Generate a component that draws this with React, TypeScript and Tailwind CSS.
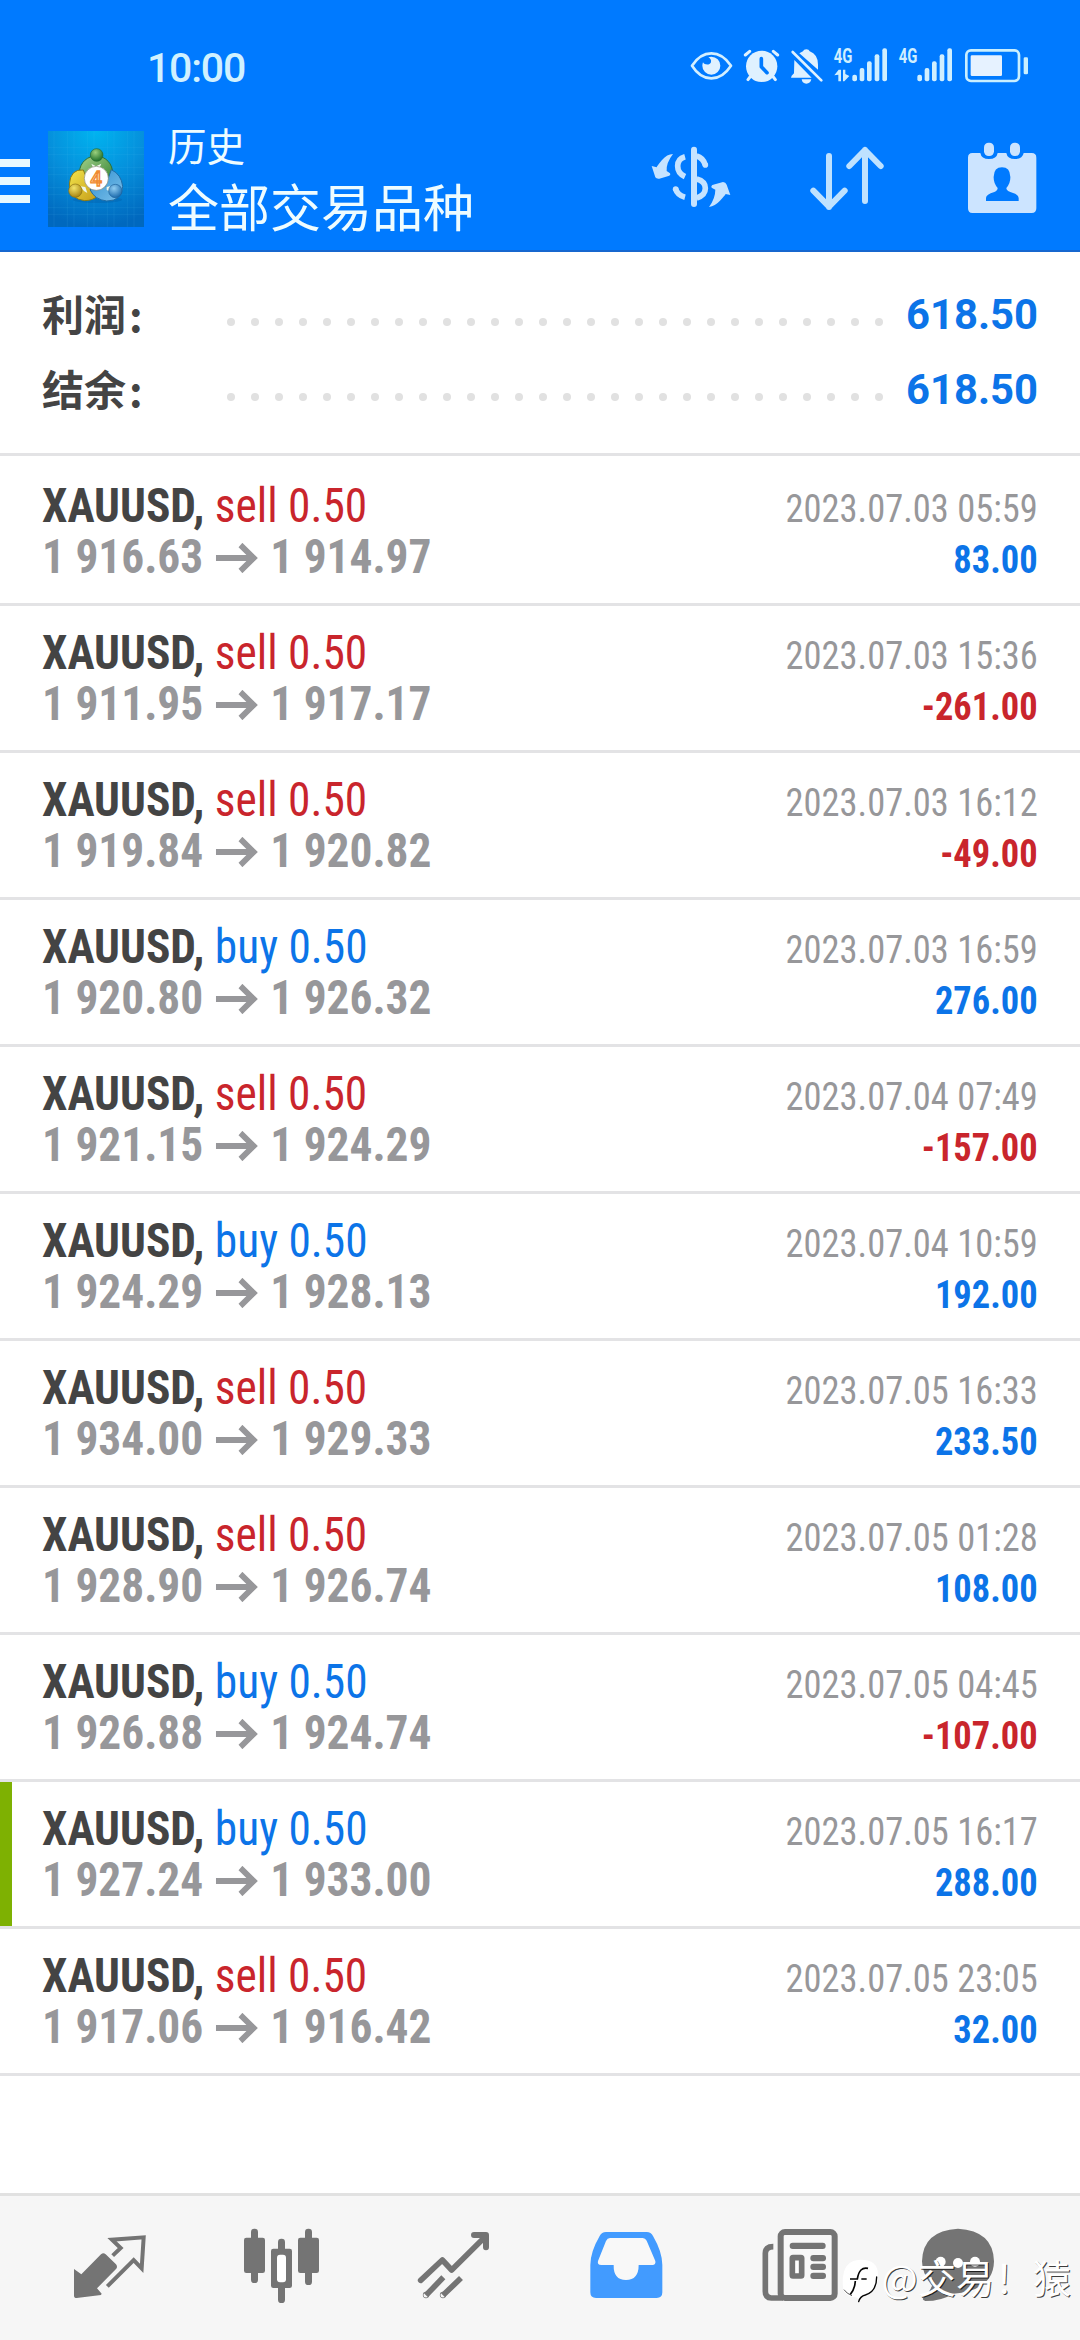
import React from "react";

type Side = "sell" | "buy";

interface Deal {
  side: Side;
  open: string;
  close: string;
  time: string;
  profit: string;
  marked?: boolean;
}

const deals: Deal[] = [
  { side: "sell", open: "1 916.63", close: "1 914.97", time: "2023.07.03 05:59", profit: "83.00" },
  { side: "sell", open: "1 911.95", close: "1 917.17", time: "2023.07.03 15:36", profit: "-261.00" },
  { side: "sell", open: "1 919.84", close: "1 920.82", time: "2023.07.03 16:12", profit: "-49.00" },
  { side: "buy", open: "1 920.80", close: "1 926.32", time: "2023.07.03 16:59", profit: "276.00" },
  { side: "sell", open: "1 921.15", close: "1 924.29", time: "2023.07.04 07:49", profit: "-157.00" },
  { side: "buy", open: "1 924.29", close: "1 928.13", time: "2023.07.04 10:59", profit: "192.00" },
  { side: "sell", open: "1 934.00", close: "1 929.33", time: "2023.07.05 16:33", profit: "233.50" },
  { side: "sell", open: "1 928.90", close: "1 926.74", time: "2023.07.05 01:28", profit: "108.00" },
  { side: "buy", open: "1 926.88", close: "1 924.74", time: "2023.07.05 04:45", profit: "-107.00" },
  { side: "buy", open: "1 927.24", close: "1 933.00", time: "2023.07.05 16:17", profit: "288.00", marked: true },
  { side: "sell", open: "1 917.06", close: "1 916.42", time: "2023.07.05 23:05", profit: "32.00" },
];

function StatusIcons() {
  return (
    <div className="flex items-center gap-[9px]">
      <svg className="h-10 w-11" viewBox="150 50 132 120" fill="none">
        <path d="M156 109Q180 72 214 72T273 109Q248 147 214 147T156 109Z" stroke="#d3efff" strokeWidth="8" strokeLinejoin="round" />
        <path d="M214 82a27 27 0 1 1-27 27 27 27 0 0 1 2-10c4 8 20 10 24 0 2-7-3-13-8-15a27 27 0 0 1 9-2Z" fill="#dff1ff" />
      </svg>
      <svg className="h-10 w-[38px]" viewBox="309 50 114 120" fill="none" stroke="#dff1ff" strokeLinecap="round">
        <circle cx="365" cy="111" r="47" fill="#dff1ff" stroke="none" />
        <path d="M316 77l13-11M413 77l-13-11" strokeWidth="9" />
        <path d="M330 143l-6 8M400 143l6 8" strokeWidth="9" />
        <path d="M364 88v24l17 18" stroke="#007aff" strokeWidth="11" strokeLinejoin="round" />
      </svg>
      <svg className="h-10 w-[34px]" viewBox="450 50 102 120" fill="#dff1ff">
        <path d="M463 92l52 53h-62l2-6 7-7Z" />
        <path d="M478 72l11-6q2-6 10-6t10 6q25 9 25 40v15Z" />
        <path d="M485 150h29q-3 13-15 13t-14-13Z" />
        <path d="M458 68l86 85" stroke="#dff1ff" strokeWidth="8" strokeLinecap="round" />
      </svg>
      <Signal arrows />
      <Signal />
      <svg className="h-10 w-[67px]" viewBox="969 50 201 120">
        <rect x="979" y="63" width="158" height="92" rx="14" fill="none" stroke="#c9efff" strokeWidth="8" />
        <rect x="992" y="78" width="94" height="62" rx="4" fill="#e6f2ff" />
        <rect x="1151" y="84" width="13" height="51" rx="4" fill="#c9efff" />
      </svg>
    </div>
  );
}

function Signal({ arrows = false }: { arrows?: boolean }) {
  return (
    <svg className="h-10 w-14" viewBox="579 50 168 120" fill="#d0efff">
      <text x="581" y="101" fontFamily="Roboto, sans-serif" fontWeight="700" fontSize="59" textLength="56" lengthAdjust="spacingAndGlyphs">
        4G
      </text>
      {arrows && <path d="M583 138l13-17h7v35h-8v-20ZM609 121h7v13l12 6-15 16h-4Z" />}
      <rect x="637" y="136" width="14" height="20" rx="6" />
      <rect x="659" y="116" width="14" height="40" rx="6" />
      <rect x="681" y="96" width="14" height="60" rx="6" />
      <rect x="704" y="75" width="14" height="81" rx="6" />
      <rect x="727" y="57" width="14" height="99" rx="6" />
    </svg>
  );
}

function AppLogo() {
  return (
    <svg className="h-24 w-24" viewBox="0 0 288 288">
      <defs>
        <radialGradient id="sky" cx="0.5" cy="0" r="1">
          <stop offset="0" stopColor="#00b4f0" />
          <stop offset="0.5" stopColor="#0590dc" />
          <stop offset="1" stopColor="#0068be" />
        </radialGradient>
        <linearGradient id="green" x1="0" y1="0" x2="1" y2="1">
          <stop offset="0" stopColor="#a5d28c" />
          <stop offset="1" stopColor="#2c7d2c" />
        </linearGradient>
        <linearGradient id="yellow" x1="0" y1="0" x2="1" y2="1">
          <stop offset="0" stopColor="#f2e44c" />
          <stop offset="1" stopColor="#c59c18" />
        </linearGradient>
        <linearGradient id="azure" x1="0" y1="0" x2="1" y2="1">
          <stop offset="0" stopColor="#2f8fd0" />
          <stop offset="1" stopColor="#7cc0ea" />
        </linearGradient>
        <radialGradient id="ballGreen" cx="0.4" cy="0.3" r="0.7">
          <stop offset="0" stopColor="#9bd07e" />
          <stop offset="1" stopColor="#20702a" />
        </radialGradient>
        <radialGradient id="ballYellow" cx="0.4" cy="0.3" r="0.7">
          <stop offset="0" stopColor="#f3e46a" />
          <stop offset="1" stopColor="#a88512" />
        </radialGradient>
        <radialGradient id="ballBlue" cx="0.4" cy="0.3" r="0.7">
          <stop offset="0" stopColor="#90cdf2" />
          <stop offset="1" stopColor="#1d6cae" />
        </radialGradient>
      </defs>
      <rect width="288" height="288" fill="url(#sky)" />
      <path d="M18 0v288M58 0v288M78 0v288M118 0v288M138 0v288M178 0v288M198 0v288M238 0v288M258 0v288M0 50h288M0 70h288M0 110h288M0 130h288M0 170h288M0 190h288M0 230h288M0 250h288" stroke="#5cc8f5" strokeOpacity="0.16" strokeWidth="2" />
      <ellipse cx="148" cy="206" rx="74" ry="10" fill="#034c94" opacity="0.25" />
      <path d="M95 132a49 49 0 0 1 98-15q4 20-8 42l-42 8Z" fill="url(#green)" stroke="#2b7038" strokeWidth="3" />
      <path d="M106 117q-38-4-42 42 2 46 46 50 26 0 40-16l-34-50Z" fill="url(#yellow)" stroke="#8d7b12" strokeWidth="3" />
      <path d="M190 116q30 14 34 50-2 44-48 44-36-4-50-34l46-10Z" fill="url(#azure)" stroke="#1f6ca5" strokeWidth="3" />
      <path d="M130 98l14 8 16-8-8 18h-14ZM96 166l16 2 6 18-10-6ZM176 168l16-4-8 18-8-6Z" fill="#eef6ea" />
      <circle cx="146" cy="72" r="19" fill="url(#ballGreen)" stroke="#286b31" strokeWidth="2" />
      <circle cx="82" cy="179" r="20" fill="url(#ballYellow)" stroke="#8c7110" strokeWidth="2" />
      <circle cx="202" cy="180" r="20" fill="url(#ballBlue)" stroke="#1d629d" strokeWidth="2" />
      <circle cx="145" cy="142" r="36" fill="#fff" stroke="#8a8a7a" strokeWidth="2" />
      <text x="144" y="164" textAnchor="middle" fontFamily="Roboto, sans-serif" fontSize="62" fontWeight="500" fill="#ffd9a8" stroke="#f08a30" strokeWidth="4">
        4
      </text>
    </svg>
  );
}

function ExchangeIcon() {
  return (
    <svg className="h-20 w-20" viewBox="30 330 240 240" fill="#c6e3ff">
      <path d="M96 375q-18 0-33 18t-16 22l-15-4 11 34q3 5 12 4l30-9q5-3 2-7l-10-7q-2-24 19-51Z" />
      <path d="M204 534q18-3 33-19t17-20l14 3-11-31q-3-8-11-8l-32 9q-5 3-2 8l11 6q0 26-19 52Z" />
      <rect x="150" y="353" width="18" height="181" rx="9" />
      <g fill="none" stroke="#c6e3ff" strokeWidth="17">
        <path d="M132 383q-22 6-22 28t22 32M132 505q-23-6-29-27" />
        <path d="M167 381q19 5 26 27" />
        <path d="M167 450q26 7 26 28t-26 29" />
      </g>
      <circle cx="104" cy="480" r="8.500" />
      <circle cx="193" cy="408" r="8.500" />
    </svg>
  );
}

function SortIcon() {
  return (
    <svg className="h-20 w-20" viewBox="501 330 240 240" fill="none" stroke="#bfe2ff" strokeWidth="18" strokeLinecap="round" strokeLinejoin="round">
      <path d="M564 381v153M517 485l47 48 47-48" />
      <path d="M672 516V363M625 411l47-48 47 48" />
    </svg>
  );
}

function CalendarIcon() {
  return (
    <svg className="h-20 w-[75px]" viewBox="975 330 225 240">
      <path d="M997 372h24q3 18 26 18t26-18h26q3 18 26 18t26-18h24q14 0 14 14v152q0 14-14 14H997q-13 0-13-14V386q0-14 13-14Z" fill="#cce4ff" />
      <rect x="1032" y="341" width="30" height="40" rx="14" fill="#cce4ff" />
      <rect x="1110" y="341" width="30" height="40" rx="14" fill="#cce4ff" />
      <path d="M1086 415q24 0 25 28 1 20-12 34 0 8 12 12 25 7 25 18v9H1038v-9q0-11 25-18 10-4 10-12-13-14-12-34 1-28 25-28Z" fill="#007aff" />
    </svg>
  );
}

function SummaryRow({ label, value }: { label: string; value: string }) {
  return (
    <div className="flex h-[75px] items-center">
      <div className="flex w-[184.5px] whitespace-nowrap pt-[3px] text-[42px] font-bold leading-[60px] text-[#444]">
        <span>{label}</span>
        <span className="-mt-[3px] ml-[3px] font-['Noto_Sans_CJK_SC',sans-serif]">:</span>
      </div>
      <div className="mt-[13px] flex w-[656px] justify-between">
        {Array.from({ length: 28 }, (_, i) => (
          <span key={i} className="size-2 rounded-full bg-[#e1e1e1]" />
        ))}
      </div>
      <div className="ml-auto text-[41.8px] font-bold text-[#0c74e8]">{value}</div>
    </div>
  );
}

function Arrow() {
  return (
    <svg className="mx-[13px] mt-[3px] h-[30px] w-[45px]" viewBox="0 0 45 30" fill="none" stroke="#97979a" strokeWidth="6">
      <path d="M0 15h40M26 2l14 13-14 13" />
    </svg>
  );
}

function DealRow({ deal }: { deal: Deal }) {
  const loss = deal.profit.startsWith("-");
  return (
    <li className="flex h-[147px] border-b-[3px] border-[#e3e3e5]">
      <div className={deal.marked ? "w-3 bg-[#7eb102]" : "w-3"} />
      <div className="flex flex-1 justify-between pl-[30px] pr-[42px] pt-[21px] [font-stretch:75%]">
        <div className="flex origin-left scale-x-[0.945] flex-col text-[48px] leading-[51px]">
          <div className="flex whitespace-pre">
            <span className="font-bold text-[#444]">XAUUSD, </span>
            <span className={deal.side === "sell" ? "text-[#c9252c]" : "text-[#0c74e8]"}>{deal.side} 0.50</span>
          </div>
          <div className="flex items-center font-bold text-[#97979a]">
            <span>{deal.open}</span>
            <Arrow />
            <span>{deal.close}</span>
          </div>
        </div>
        <div className="mt-1 flex origin-right scale-x-[0.935] flex-col items-end text-[39px] leading-[51px]">
          <span className="text-[#97979a]">{deal.time}</span>
          <span className={loss ? "font-bold text-[#c9252c]" : "font-bold text-[#0c74e8]"}>{deal.profit}</span>
        </div>
      </div>
    </li>
  );
}

function BottomBar() {
  const gray = "#747474";
  return (
    <nav className="relative mt-auto grid h-[147px] grid-cols-6 justify-items-center border-t-[3px] border-[#e1e1e1] bg-[#f6f6f6] px-6 pt-6">
      <svg className="size-[90px]" viewBox="15 90 270 270">
        <path d="M42 237l22 16 59-60q7-7 14 0l31 30q6 7 0 14l-57 58 14 16-2 4-73 9q-8 0-8-7Z" fill={gray} />
        <path d="M158 197l24-23-26-25 95-7-6 93-24-25-79 79" fill="none" stroke={gray} strokeWidth="12" />
      </svg>
      <svg className="size-[90px]" viewBox="531 90 270 270" fill={gray}>
        <rect x="552" y="143" width="63" height="106" rx="7" />
        <rect x="573" y="116" width="21" height="163" rx="10" />
        <rect x="714" y="143" width="63" height="106" rx="7" />
        <rect x="735" y="116" width="21" height="169" rx="10" />
        <rect x="654" y="146" width="21" height="193" rx="10" />
        <rect x="633" y="176" width="63" height="118" rx="7" />
        <rect x="651" y="194" width="27" height="83" rx="9" fill="#fff" />
      </svg>
      <svg className="size-[90px]" viewBox="1047 90 270 270" fill="none" stroke={gray} strokeWidth="17" strokeLinejoin="round">
        <path d="M1082 271l65-61 28 30 99-98" strokeLinecap="round" />
        <path d="M1242 135h36v37" strokeWidth="18" strokeLinecap="round" />
        <path d="M1098 316l52-54M1149 316l54-52" />
        <circle cx="1098" cy="315" r="1" />
        <circle cx="1149" cy="315" r="1" />
      </svg>
      <svg className="size-[90px]" viewBox="3 90 270 270">
        <path d="M78 126h122q13 0 19 12 28 48 28 87v82q0 17-17 17H48q-17 0-17-17v-82q0-39 28-87 6-12 19-12Z" fill="#429bff" />
        <path d="M90 144h98q8 0 12 8l26 61q2 12-9 12h-41q0 45-38 45t-37-45H64q-13 0-10-12l24-60q4-9 12-9Z" fill="#f8f8f8" />
      </svg>
      <svg className="size-[90px]" viewBox="519 90 270 270">
        <path d="M580 170q-24 0-24 20v114q0 20 18 20h35" fill="none" stroke={gray} strokeWidth="17" />
        <rect x="602" y="126" width="162" height="198" rx="13" fill="#f8f8f8" stroke={gray} strokeWidth="18" />
        <g fill={gray}>
          <rect x="629" y="158" width="108" height="19" rx="9" />
          <rect x="691" y="195" width="47" height="19" rx="9" />
          <rect x="691" y="221" width="47" height="19" rx="9" />
          <rect x="691" y="248" width="47" height="19" rx="9" />
        </g>
        <rect x="637" y="203" width="28" height="55" rx="2" fill="#fff" stroke={gray} strokeWidth="17" />
      </svg>
      <svg className="size-[90px]" viewBox="1035 90 270 270" overflow="visible">
        <path d="M1134 116q106 6 108 98-2 88-122 97-36 22-84 22-13-3-4-12 18-16 24-34-30-36-30-73 2-92 108-98Z" fill={gray} />
        <circle cx="1082" cy="215" r="15" fill="#fff" />
        <circle cx="1134" cy="219" r="15" fill="#fff" />
        <circle cx="1185" cy="215" r="15" fill="#fff" />
      </svg>
      <div className="absolute right-[9px] top-[59px] flex items-start">
        <svg className="mt-1 h-[44px] w-[38px]" viewBox="780 208 114 132">
          <path d="M836 210q52 0 52 45 0 50-36 63-12 3-20 14-6-12-20-10-18-2-28-20-12-90 52-92Z" fill="#fff" />
          <path d="M884 262q0 44-34 54-16 4-20 20" fill="none" stroke="#050505" strokeWidth="4" strokeLinecap="round" />
          <path d="M786 300q8 12 24 18" fill="none" stroke="#050505" strokeWidth="2" />
          <path d="M858 236q-26-6-32 32h-22M838 268h16M820 274q-2 26-15 40" fill="none" stroke="#050505" strokeWidth="5" />
        </svg>
        <span className="ml-[2px] whitespace-nowrap font-['Noto_Sans_CJK_SC',sans-serif] text-[38.3px] leading-[44px] text-white [text-shadow:1px_1px_0_rgba(0,0,0,0.75)]">@交易！猿</span>
      </div>
    </nav>
  );
}

export default function App() {
  return (
    <div className="flex h-[2340px] w-[1080px] flex-col overflow-hidden bg-white font-['Roboto','Noto_Sans_CJK_SC',sans-serif]">
      <header className="flex h-[252px] flex-col border-b-2 border-[#1767cf] bg-[#007aff]">
        <div className="flex h-[126px] items-center justify-between pb-px pl-[147px] pr-[50px] pt-2">
          <span className="pt-[5px] text-[41px] font-medium tracking-[-1.2px] text-[#d0f1ff]">10:00</span>
          <StatusIcons />
        </div>
        <div className="flex h-[126px] items-start">
          <div className="mt-[34px] flex w-[30px] flex-col gap-[10px]">
            <span className="h-2 bg-[#e8f8ff]" />
            <span className="h-2 bg-[#e8f8ff]" />
            <span className="h-2 bg-[#e8f8ff]" />
          </div>
          <div className="ml-[18px] mt-[6px]">
            <AppLogo />
          </div>
          <div className="ml-[24px] mt-px flex w-[476px] flex-col text-[#eefcff]">
            <span className="text-[38.5px] leading-[44px]">历史</span>
            <span className="mt-[10px] text-[51px] leading-[60px]">全部交易品种</span>
          </div>
          <div className="mt-[14px] flex gap-[77px] pl-[7px]">
            <ExchangeIcon />
            <SortIcon />
            <CalendarIcon />
          </div>
        </div>
      </header>
      <section className="h-[204px] border-b-[3px] border-[#e3e3e5] px-[42px] pt-[26px]">
        <SummaryRow label="利润" value="618.50" />
        <SummaryRow label="结余" value="618.50" />
      </section>
      <ul className="pt-[3px]">
        {deals.map((deal) => (
          <DealRow key={deal.time} deal={deal} />
        ))}
      </ul>
      <BottomBar />
    </div>
  );
}
